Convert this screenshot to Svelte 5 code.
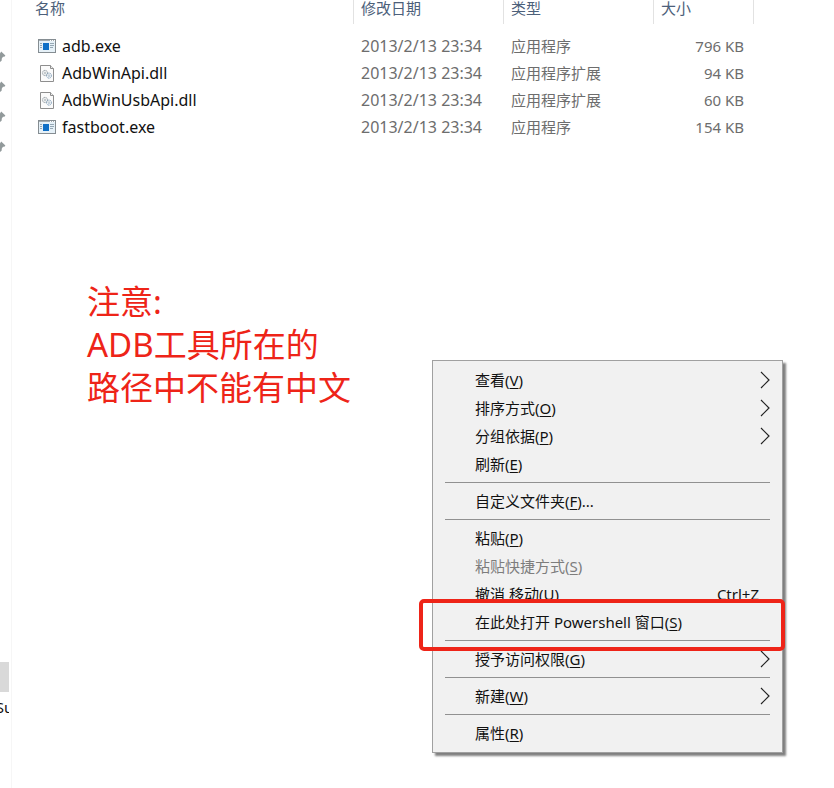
<script lang="ts">
	type FileRow = { name: string; kind: 'exe' | 'dll'; date: string; type: string; size: string };
	type MenuItem = {
		label: string;
		key: string;
		tail?: string;
		shortcut?: string;
		submenu?: boolean;
		disabled?: boolean;
		marked?: boolean;
	};

	const FILES: FileRow[] = [
		{ name: 'adb.exe', kind: 'exe', date: '2013/2/13 23:34', type: '应用程序', size: '796 KB' },
		{ name: 'AdbWinApi.dll', kind: 'dll', date: '2013/2/13 23:34', type: '应用程序扩展', size: '94 KB' },
		{ name: 'AdbWinUsbApi.dll', kind: 'dll', date: '2013/2/13 23:34', type: '应用程序扩展', size: '60 KB' },
		{ name: 'fastboot.exe', kind: 'exe', date: '2013/2/13 23:34', type: '应用程序', size: '154 KB' }
	];

	// each inner array is one group, groups are split by a separator line
	const MENU: MenuItem[][] = [
		[
			{ label: '查看', key: 'V', submenu: true },
			{ label: '排序方式', key: 'O', submenu: true },
			{ label: '分组依据', key: 'P', submenu: true },
			{ label: '刷新', key: 'E' }
		],
		[{ label: '自定义文件夹', key: 'F', tail: '...' }],
		[
			{ label: '粘贴', key: 'P' },
			{ label: '粘贴快捷方式', key: 'S', disabled: true },
			{ label: '撤消 移动', key: 'U', shortcut: 'Ctrl+Z' },
			{ label: '在此处打开 Powershell 窗口', key: 'S', marked: true }
		],
		[{ label: '授予访问权限', key: 'G', submenu: true }],
		[{ label: '新建', key: 'W', submenu: true }],
		[{ label: '属性', key: 'R' }]
	];

	const PINS = [0, 1, 2, 3];

	let selected = $state('');
</script>

<div class="explorer" lang="zh-CN">
	<nav class="rail">
		<ul class="pins">
			{#each PINS as pin (pin)}
				<li>
					<svg width="6" height="14" viewBox="0 0 6 14" aria-hidden="true">
						<path d="M0 3.5 L1.2 1.5 L5.4 5.4 L4.4 6.8 L3 6.8 L1.8 8.4 L1.6 10.8 L0 12 Z" fill="#929a9b" />
					</svg>
				</li>
			{/each}
		</ul>
		<div class="rail-selected"></div>
		<div class="rail-item">Su</div>
	</nav>

	<main class="content">
		<table class="files">
			<thead>
				<tr>
					<th class="col-name">名称</th>
					<th class="col-date">修改日期</th>
					<th class="col-type">类型</th>
					<th class="col-size">大小</th>
				</tr>
			</thead>
			<tbody>
				{#each FILES as file (file.name)}
					<tr class:selected={selected === file.name} onclick={() => (selected = file.name)}>
						<td class="name">
							<span class="name-cell">
								{#if file.kind === 'exe'}
									<svg width="18" height="18" viewBox="0 0 18 18" aria-hidden="true">
										<rect x="0.5" y="1.5" width="17" height="13" fill="#e6f1f8" stroke="#858d92" />
										<path d="M1 2.5h16" stroke="#a4acb1" />
										<path d="M12 2.5h1M14 2.5h1M16 2.5h1" stroke="#fff" />
										<rect x="5" y="5" width="6" height="7" fill="#0f6fc6" />
										<path d="M2 5.5h2M2 7.5h2M2 9.5h2M12 5.5h4M12 7.5h4M12 9.5h3" stroke="#95a7b4" />
									</svg>
								{:else}
									<svg width="18" height="18" viewBox="0 0 18 18" aria-hidden="true">
										<path d="M2.5 0.5h10l3 3v13h-13z" fill="#fbfbfb" stroke="#8e8e8e" />
										<path d="M12.5 0.5v3h3" fill="#eee" stroke="#8e8e8e" />
										<circle cx="7" cy="8" r="2.6" fill="none" stroke="#8c959b" stroke-dasharray="1.3 0.5" />
										<circle cx="7" cy="8" r="1" fill="none" stroke="#a5adb2" stroke-width="0.8" />
										<circle cx="11" cy="10.6" r="2.5" fill="none" stroke="#7e9db8" stroke-dasharray="1.3 0.5" />
										<circle cx="11" cy="10.6" r="0.9" fill="none" stroke="#9db2c4" stroke-width="0.8" />
									</svg>
								{/if}
								{file.name}
							</span>
						</td>
						<td class="date">{file.date}</td>
						<td>{file.type}</td>
						<td class="size">{file.size}</td>
					</tr>
				{/each}
			</tbody>
		</table>

		<p class="note">注意:<br />ADB工具所在的<br />路径中不能有中文</p>
	</main>

	<div class="menu" role="menu">
		{#each MENU as group, i (i)}
			{#if i > 0}
				<hr />
			{/if}
			{#each group as item (item.label)}
				<button class="item" class:marked={item.marked} role="menuitem" disabled={item.disabled}>
					<span class="label">{item.label}(<u>{item.key}</u>){item.tail ?? ''}</span>
					{#if item.shortcut}
						<span class="shortcut">{item.shortcut}</span>
					{/if}
					{#if item.submenu}
						<svg class="chevron" width="10" height="18" viewBox="0 0 10 18" aria-hidden="true">
							<path d="M1 1l8 8l-8 8" fill="none" stroke="#222" stroke-width="1.2" />
						</svg>
					{/if}
				</button>
			{/each}
		{/each}
	</div>
</div>

<style>
	:global(body) {
		margin: 0;
		background: #fff;
	}

	.explorer {
		position: relative;
		display: flex;
		min-height: 100vh;
		overflow: hidden;
		font-family: 'Noto Sans', 'Noto Sans CJK SC', sans-serif;
		font-size: 15px;
		line-height: 27px;
		color: #111;
	}

	.rail {
		box-sizing: border-box;
		flex: none;
		width: 12px;
		padding: 42px 2px 0 0;
		border-right: 1px solid #f6f6f6;
	}

	.pins {
		list-style: none;
		margin: 0 0 500px;
		padding: 0;
	}

	.pins li {
		display: flex;
		align-items: center;
		height: 30px;
	}

	.rail-selected {
		height: 30px;
		background: #d9d9d9;
	}

	.rail-item {
		display: flex;
		justify-content: center;
		overflow: hidden;
		line-height: 30px;
	}

	.content {
		flex: 1;
		min-width: 0;
		padding-right: 80px;
	}

	.files {
		width: 100%;
		table-layout: fixed;
		border-collapse: separate;
		border-spacing: 0;
		color: #6d6d6d;
	}

	th {
		height: 16px;
		padding: 0 7px 8px;
		border-right: 1px solid #e2e2e2;
		font-weight: 400;
		line-height: 16px;
		text-align: left;
		color: #4c607a;
	}

	.col-name {
		padding-left: 23px;
	}

	.col-date,
	.col-type {
		width: 135px;
	}

	.col-size {
		width: 85px;
	}

	tbody::before {
		content: '';
		display: block;
		height: 9px;
	}

	td {
		height: 27px;
		padding: 0 8px 0 7px;
		white-space: nowrap;
	}

	td.name {
		padding-left: 26px;
		font-size: 16px;
		color: #111;
	}

	td.date {
		font-size: 16px;
	}

	td.size {
		padding-right: 10px;
		text-align: right;
	}

	tr.selected td {
		background: #cce8ff;
	}

	.name-cell {
		display: flex;
		align-items: center;
		gap: 6px;
	}

	.note {
		margin: 139px 0 0 75px;
		font-size: 33px;
		line-height: 43px;
		color: #ee2418;
	}

	.menu {
		position: absolute;
		top: 360px;
		left: 432px;
		box-sizing: border-box;
		width: 351px;
		padding: 5px 0;
		border: 1px solid #a0a0a0;
		background: #f1f1f1;
		box-shadow: 3px 3px 2px rgba(0, 0, 0, 0.5);
	}

	.menu hr {
		height: 1px;
		margin: 4px 12px;
		border: 0;
		background: #919191;
	}

	.item {
		position: relative;
		display: flex;
		align-items: center;
		width: 100%;
		height: 28px;
		padding: 0 12px 0 42px;
		border: 0;
		background: none;
		font: inherit;
		color: #111;
		text-align: left;
	}

	.item:disabled {
		color: #7d7d7d;
	}

	.item:hover:not(:disabled) {
		background: #fff;
	}

	.item u {
		text-underline-offset: 2px;
	}

	.label {
		flex: 1;
		white-space: nowrap;
	}

	.shortcut {
		padding-right: 11px;
	}

	/* red frame drawn over the menu, reaches past the neighbouring rows */
	.marked::after {
		content: '';
		position: absolute;
		z-index: 1;
		inset: -9px -3px -15px -14px;
		border: 4px solid #ee2418;
		border-radius: 5px;
		pointer-events: none;
	}
</style>
